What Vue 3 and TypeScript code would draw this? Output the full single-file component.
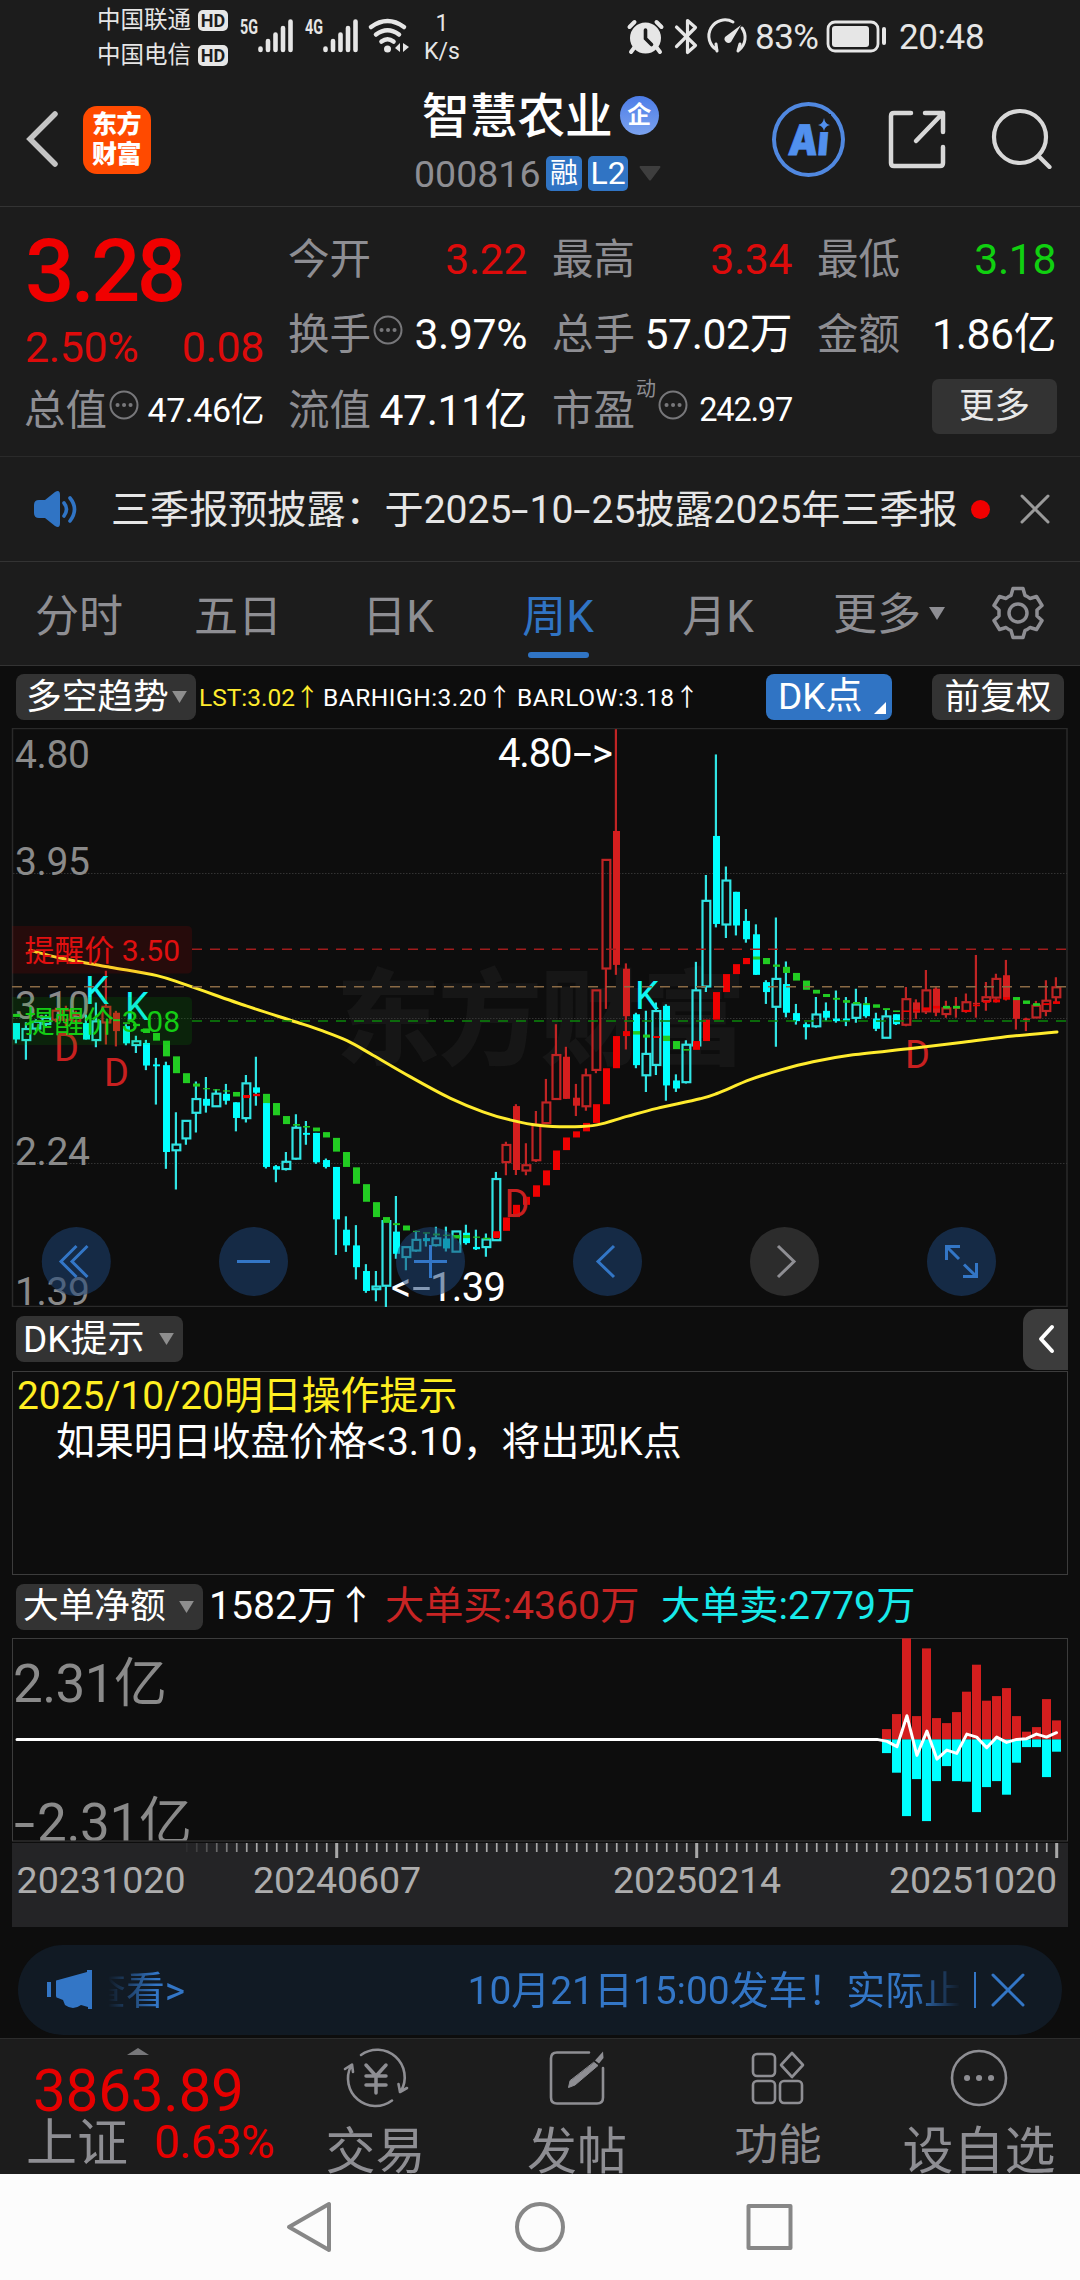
<script setup lang="ts">
type Kind = 'c' | 'o' | 'r' | 'h'
type Candle = [kind: Kind, high: number, low: number, top: number, bottom: number]
type Trend = [index: number, color: 'g' | 'r', top: number, bottom: number]

// Candle geometry is stored in chart units; 784 units span 300 pixels.
const STEP = 10
const X0 = 16.3
const cx = (i: number) => X0 + STEP * i
const cy = (v: number) => 720 + v / 2.6133

const candles: Candle[] = [
  ['c', 792, 845, 792, 835], ['o', 790, 888, 806, 838], ['o', 782, 815, 787, 808], ['o', 770, 802, 777, 796],
  ['h', 752, 790, 758, 785], ['h', 747, 800, 757, 785], ['h', 760, 795, 768, 788], ['c', 770, 835, 792, 835],
  ['o', 738, 855, 786, 838], ['h', 655, 848, 748, 792], ['r', 760, 853, 765, 813], ['c', 795, 850, 800, 845],
  ['o', 825, 870, 838, 851], ['c', 836, 915, 844, 903], ['c', 883, 1005, 900, 905], ['c', 893, 1173, 902, 1129],
  ['o', 1025, 1227, 1108, 1126], ['o', 1046, 1110, 1046, 1095], ['o', 945, 1078, 989, 1028], ['c', 933, 1026, 990, 1008],
  ['o', 965, 1011, 975, 1011], ['c', 951, 1005, 977, 995], ['c', 999, 1075, 999, 1040], ['o', 928, 1052, 948, 1042],
  ['c', 880, 1008, 960, 974], ['c', 1001, 1172, 1001, 1168], ['c', 1163, 1208, 1166, 1175], ['o', 1129, 1177, 1153, 1175],
  ['o', 1030, 1150, 1064, 1148], ['c', 1048, 1110, 1079, 1084], ['c', 1079, 1160, 1079, 1156], ['c', 1146, 1172, 1150, 1168],
  ['c', 1168, 1398, 1168, 1305], ['c', 1297, 1390, 1332, 1373], ['c', 1320, 1462, 1373, 1430], ['c', 1422, 1497, 1440, 1492],
  ['o', 1440, 1519, 1479, 1489], ['o', 1308, 1536, 1308, 1480], ['c', 1244, 1408, 1337, 1395], ['o', 1376, 1438, 1376, 1405],
  ['o', 1335, 1390, 1357, 1388], ['c', 1342, 1376, 1354, 1362], ['o', 1324, 1376, 1353, 1374], ['c', 1324, 1389, 1355, 1381],
  ['o', 1335, 1391, 1335, 1391], ['c', 1319, 1371, 1340, 1367], ['c', 1332, 1385, 1377, 1383], ['o', 1342, 1403, 1356, 1379],
  ['o', 1181, 1361, 1198, 1361], ['h', 1102, 1190, 1109, 1157], ['r', 1004, 1189, 1009, 1176], ['h', 1106, 1190, 1162, 1179],
  ['h', 1022, 1155, 1056, 1152], ['h', 938, 1055, 998, 1055], ['h', 795, 992, 874, 992], ['r', 854, 990, 880, 990],
  ['r', 951, 1035, 987, 1008], ['h', 911, 1021, 927, 1011], ['h', 705, 923, 705, 916], ['h', 364, 755, 364, 651],
  ['r', 24, 666, 290, 640], ['r', 636, 861, 650, 774], ['c', 765, 910, 769, 902], ['o', 760, 972, 871, 930],
  ['o', 738, 928, 759, 903], ['c', 743, 995, 747, 955], ['c', 926, 972, 942, 963], ['o', 837, 950, 847, 948],
  ['o', 632, 852, 705, 852], ['o', 405, 711, 471, 698], ['c', 90, 542, 303, 533], ['o', 383, 570, 418, 536],
  ['c', 449, 563, 449, 537], ['c', 494, 582, 525, 573], ['c', 534, 666, 560, 666], ['c', 680, 742, 685, 711],
  ['o', 516, 854, 675, 751], ['c', 631, 777, 690, 765], ['c', 742, 796, 766, 787], ['c', 790, 835, 795, 803],
  ['o', 724, 804, 768, 802], ['c', 738, 787, 760, 778], ['c', 707, 791, 780, 787], ['c', 724, 800, 780, 787],
  ['o', 702, 791, 742, 780], ['c', 724, 778, 742, 774], ['c', 765, 813, 780, 807], ['o', 758, 832, 773, 832],
  ['c', 769, 797, 769, 795], ['h', 698, 800, 728, 798], ['r', 730, 781, 738, 765], ['h', 653, 768, 705, 763],
  ['r', 698, 774, 702, 765], ['h', 734, 778, 752, 770], ['r', 724, 778, 750, 755], ['h', 715, 765, 736, 762],
  ['r', 614, 778, 739, 743], ['h', 685, 760, 723, 736], ['h', 663, 738, 675, 727], ['r', 627, 733, 667, 728],
  ['r', 730, 809, 730, 781], ['r', 778, 813, 780, 784], ['h', 734, 779, 745, 779], ['h', 680, 774, 732, 762],
  ['h', 672, 741, 697, 726],
]

const trend: Trend[] = [
  [0, 'g', 768, 776], [10, 'g', 782, 787], [11, 'g', 790, 794], [12, 'g', 794, 800], [13, 'g', 806, 818],
  [14, 'g', 818, 838], [15, 'g', 838, 879], [16, 'g', 879, 923], [17, 'g', 923, 949], [18, 'g', 950, 958],
  [19, 'g', 962, 965], [20, 'g', 965, 968], [21, 'g', 968, 971], [22, 'g', 972, 984], [23, 'r', 980, 988],
  [24, 'r', 977, 983], [25, 'g', 977, 1001], [26, 'g', 1001, 1033], [27, 'g', 1035, 1056], [28, 'g', 1056, 1060],
  [29, 'g', 1061, 1065], [30, 'g', 1065, 1075], [31, 'g', 1077, 1091], [32, 'g', 1092, 1128], [33, 'g', 1129, 1168],
  [34, 'g', 1169, 1212], [35, 'g', 1213, 1259], [36, 'g', 1260, 1299], [37, 'g', 1299, 1314], [38, 'g', 1315, 1320],
  [39, 'g', 1321, 1334], [40, 'g', 1335, 1338], [41, 'g', 1339, 1342], [42, 'g', 1342, 1347], [43, 'g', 1345, 1348],
  [44, 'g', 1346, 1355], [45, 'g', 1346, 1354], [46, 'g', 1350, 1353], [47, 'g', 1353, 1357], [48, 'r', 1336, 1354],
  [49, 'r', 1300, 1335], [50, 'r', 1267, 1299], [51, 'r', 1246, 1267], [52, 'r', 1216, 1246], [53, 'r', 1177, 1216],
  [54, 'r', 1125, 1176], [55, 'r', 1091, 1124], [56, 'r', 1075, 1091], [57, 'r', 1053, 1075], [58, 'r', 1004, 1053],
  [59, 'r', 910, 1004], [60, 'r', 826, 910], [61, 'r', 813, 826], [62, 'g', 813, 822], [63, 'g', 822, 830],
  [64, 'r', 826, 831], [65, 'g', 825, 839], [66, 'g', 839, 860], [67, 'g', 860, 864], [68, 'r', 839, 862],
  [69, 'r', 783, 839], [70, 'r', 711, 783], [71, 'r', 664, 711], [72, 'r', 638, 664], [73, 'r', 622, 638],
  [74, 'g', 618, 626], [75, 'g', 622, 638], [76, 'g', 639, 645], [77, 'g', 645, 661], [78, 'g', 661, 681],
  [79, 'g', 681, 705], [80, 'g', 705, 715], [81, 'g', 716, 724], [82, 'g', 726, 731], [83, 'g', 732, 739],
  [84, 'g', 737, 743], [85, 'g', 740, 745], [86, 'g', 743, 752], [87, 'g', 753, 758], [88, 'g', 759, 763],
  [89, 'r', 759, 763], [90, 'r', 757, 761], [91, 'r', 751, 760], [92, 'r', 747, 754], [93, 'g', 747, 754],
  [94, 'g', 747, 754], [95, 'r', 758, 763], [96, 'r', 744, 748], [97, 'r', 734, 739], [98, 'r', 730, 738],
  [99, 'r', 724, 731], [100, 'g', 724, 732], [101, 'g', 733, 742], [102, 'g', 740, 747], [103, 'r', 740, 745],
  [104, 'r', 735, 742],
]

const average: [number, number][] = [
  [30, 602], [60, 622], [110, 646], [157, 668], [187, 693], [247, 748], [297, 790], [322, 812], [347, 838], [373, 876],
  [410, 932], [450, 988], [483, 1024], [510, 1045], [540, 1060], [573, 1063], [597, 1058], [627, 1036],
  [657, 1015], [700, 990], [717, 976], [750, 940], [780, 915], [813, 893], [853, 875], [913, 858],
  [963, 842], [1013, 826], [1057, 815],
]

function smooth(points: [number, number][]): string {
  const p = points.map(([x, v]) => [x, cy(v)])
  let d = `M${p[0][0]} ${p[0][1].toFixed(1)}`
  for (let i = 0; i < p.length - 1; i++) {
    const a = p[Math.max(i - 1, 0)]
    const b = p[i]
    const c = p[i + 1]
    const e = p[Math.min(i + 2, p.length - 1)]
    const c1 = [b[0] + (c[0] - a[0]) / 6, b[1] + (c[1] - a[1]) / 6]
    const c2 = [c[0] - (e[0] - b[0]) / 6, c[1] - (e[1] - b[1]) / 6]
    d += ` C${c1.map(n => n.toFixed(1)).join(' ')} ${c2.map(n => n.toFixed(1)).join(' ')} ${c.map(n => n.toFixed(1)).join(' ')}`
  }
  return d
}
const averagePath = smooth(average)

const priceLabels = [
  { t: '4.80', y: 767.5 }, { t: '3.95', y: 875 }, { t: '3.10', y: 1019 }, { t: '2.24', y: 1164.5 }, { t: '1.39', y: 1304.5 },
]
const marks = [
  { t: 'K', x: 85, y: 1004 }, { t: 'K', x: 125, y: 1019.5 }, { t: 'K', x: 635, y: 1008.5 },
  { t: 'D', x: 54, y: 1061 }, { t: 'D', x: 104, y: 1086 }, { t: 'D', x: 504.5, y: 1217 }, { t: 'D', x: 905, y: 1067.5 },
]

// Large-order flow bars: offsets above and below the zero line, in pixels.
const flow: [number, number][] = [
  [10.3, 13.7], [25.3, 33.3], [101, 76.7], [23.3, 39.7], [91, 81.7], [21.3, 41.7], [16.3, 26.7], [27.3, 41.7],
  [47.7, 42.3], [74.7, 72.7], [38.7, 47.7], [43.3, 41.7], [51.3, 55.3], [23.3, 23.3], [7.7, 7.7], [12.3, 7.7],
  [40.3, 37.7], [19, 12.3],
]
const net = [2, 7.3, -23.7, 16, -8.3, 19.7, 10.7, 14, -5.3, -2.3, 8.3, -2.3, 3, 0, -0.7, -5.3, -2.3, -6.7]
const ZERO = 1739.4
const netPath = `M17 ${ZERO} H877 ` + net.map((v, i) => `L${(887 + i * 9.97).toFixed(1)} ${(ZERO + v).toFixed(1)}`).join(' ')

const ticks = Array.from({ length: 88 }, (_, i) => ({
  x: 186.7 + i * 10,
  major: i === 15 || i === 51 || i === 87,
  opacity: Math.min(1, (i + 0.5) / 7),
}))

const tabs = ['分时', '五日', '日K', '周K', '月K']
</script>

<template>
  <div class="app">
    <div class="status">
      <div class="carriers">
        <div><span>中国联通</span><b>HD</b></div>
        <div><span>中国电信</span><b>HD</b></div>
      </div>
      <svg class="signals" width="176" height="75" viewBox="236 0 176 75">
        <g fill="#e6e6e6">
          <text x="240" y="34" font-size="21" font-weight="700" textLength="18" lengthAdjust="spacingAndGlyphs">5G</text>
          <text x="305" y="34" font-size="21" font-weight="700" textLength="18" lengthAdjust="spacingAndGlyphs">4G</text>
        </g>
        <g stroke="#e6e6e6" stroke-width="4.600" stroke-linecap="round">
          <path d="M260.500 48.500V50M268 41V50M275.500 34.500V50M283 28V50M290.500 21.500V50" />
          <path d="M325.500 48.500V50M333 41V50M340.500 34.500V50M348 28V50M355.500 21.500V50" />
        </g>
        <g fill="none" stroke="#e6e6e6" stroke-width="4.600" stroke-linecap="round">
          <path d="M371 27Q387.500 15 404 27" /><path d="M376 34.500Q387.500 26 399 34.500" /><path d="M381.500 41.500Q387.500 37 393.500 41.500" />
        </g>
        <circle cx="387.500" cy="49" r="3.500" fill="#e6e6e6" />
        <path d="M400 43v9l-5-4zM403 43v9l6-5z" fill="#e6e6e6" />
      </svg>
      <div class="speed"><span>1</span><span>K/s</span></div>
      <svg class="sys" width="124" height="75" viewBox="626 0 124 75">
        <circle cx="645.500" cy="38" r="15.500" fill="#e6e6e6" />
        <path d="M629.500 27l5-5M661.500 27l-5-5M634 48l-3 4M657 48l3 4" stroke="#e6e6e6" stroke-width="4" stroke-linecap="round" />
        <path d="M645.500 30v8.500l6 6" stroke="#1c1c1c" stroke-width="3.600" fill="none" stroke-linecap="round" />
        <path d="M676.500 27l19 18.500-8 7V20.500l8 7L676.500 46.500" fill="none" stroke="#e6e6e6" stroke-width="3.200" stroke-linejoin="round" stroke-linecap="round" />
        <path d="M717 50a16 16 0 0 1 16-28M742 28a16 16 0 0 1-3 22M716 44l1 7M740 44l-2 7" fill="none" stroke="#e6e6e6" stroke-width="3" stroke-linecap="round" />
        <path d="M741 25L731 42a4 4 0 0 1-6-5z" fill="#e6e6e6" />
      </svg>
      <span class="pct">83%</span>
      <svg class="batt" width="62" height="34" viewBox="0 0 62 34">
        <rect x="2" y="2" width="50" height="29" rx="7" fill="none" stroke="#e6e6e6" stroke-width="2.800" />
        <rect x="6" y="6" width="37" height="21" rx="3" fill="#e6e6e6" />
        <path d="M58 9v14" stroke="#e6e6e6" stroke-width="4" stroke-linecap="round" />
      </svg>
      <span class="clock">20:48</span>
    </div>

    <div class="header">
      <svg class="back" width="36" height="60" viewBox="0 0 36 60"><path d="M30 5L5 30L30 55" fill="none" stroke="#c4c4c4" stroke-width="5.500" stroke-linecap="round" /></svg>
      <div class="logo"><span>东方</span><span>财富</span></div>
      <div class="title">
        <div class="name"><span>智慧农业</span><i>企</i></div>
        <div class="code">
          <span>000816</span><b class="rz">融</b><b class="l2">L2</b>
          <svg width="22" height="15" viewBox="0 0 22 15"><path d="M1 0H21Q22 1 21 2L12 14Q11 15 10 14L1 2Q0 1 1 0Z" fill="#3e3e3e" /></svg>
        </div>
      </div>
      <div class="ai"><span>Ai</span><svg width="15" height="18" viewBox="0 0 15 18"><path d="M8 4Q9 10 14 11Q9 12 8 17Q7 12 2 11Q7 10 8 4Z" fill="#5190ee" /></svg></div>
      <svg class="share" width="62" height="62" viewBox="0 0 62 62" fill="none" stroke="#d8d8d8" stroke-width="4.500" stroke-linecap="round" stroke-linejoin="round">
        <path d="M24 4H7Q4 4 4 7V54Q4 57 7 57H53Q56 57 56 54V38" /><path d="M38 4H56V23M56 4L29 32" />
      </svg>
      <svg class="search" width="62" height="62" viewBox="0 0 62 62" fill="none" stroke="#d8d8d8" stroke-width="4.200" stroke-linecap="round"><circle cx="29" cy="30" r="26" /><path d="M47.500 49L58.500 60" /></svg>
    </div>

    <div class="quote">
      <div class="main">
        <div class="price">3.28</div>
        <div class="chg"><span>2.50%</span><span>0.08</span></div>
        <div class="cell"><span>总值</span><svg class="more" width="30" height="30" viewBox="0 0 30 30"><circle cx="15" cy="15" r="13.500" /><path d="M8.500 15h.1M15 15h.1M21.500 15h.1" /></svg><em class="sm">47.46亿</em></div>
      </div>
      <div class="col c2">
        <div class="cell"><span>今开</span><em class="up">3.22</em></div>
        <div class="cell"><span>换手</span><svg class="more" width="30" height="30" viewBox="0 0 30 30"><circle cx="15" cy="15" r="13.500" /><path d="M8.500 15h.1M15 15h.1M21.500 15h.1" /></svg><em>3.97%</em></div>
        <div class="cell"><span>流值</span><em>47.11亿</em></div>
      </div>
      <div class="col c3">
        <div class="cell"><span>最高</span><em class="up">3.34</em></div>
        <div class="cell"><span>总手</span><em>57.02万</em></div>
        <div class="cell"><span>市盈</span><sup>动</sup><svg class="more" width="30" height="30" viewBox="0 0 30 30"><circle cx="15" cy="15" r="13.500" /><path d="M8.500 15h.1M15 15h.1M21.500 15h.1" /></svg><em class="sm pe">242.97</em></div>
      </div>
      <div class="col c4">
        <div class="cell"><span>最低</span><em class="down">3.18</em></div>
        <div class="cell"><span>金额</span><em>1.86亿</em></div>
        <div class="cell end"><button>更多</button></div>
      </div>
    </div>

    <div class="notice">
      <svg class="spk" width="46" height="38" viewBox="0 0 46 38"><path d="M6 10H12L22 2Q27-1 27 5V33Q27 39 22 36L12 28H6Q1 28 1 23V15Q1 10 6 10Z" fill="#3074c4" /><path d="M31 13q5 6 0 13M37 8q9 11 0 23" fill="none" stroke="#3074c4" stroke-width="3.600" stroke-linecap="round" /></svg>
      <span class="txt">三季报预披露：于2025<i>-</i>10<i>-</i>25披露2025年三季报</span>
      <u class="dot" />
      <svg class="x" width="30" height="30" viewBox="0 0 30 30"><path d="M2 2L28 28M28 2L2 28" stroke="#9a9a9a" stroke-width="3" stroke-linecap="round" /></svg>
    </div>

    <div class="tabs">
      <div v-for="(t, i) in tabs" :key="t" class="tab" :class="{ on: i === 3 }">{{ t }}</div>
      <div class="tab wide">更多<svg width="16" height="13" viewBox="0 0 16 13"><path d="M0 0H16L8 13Z" fill="#8e8e93" /></svg></div>
      <svg class="gear" width="54" height="54" viewBox="-27 -27 54 54" fill="none" stroke="#8e8e93" stroke-width="3.500" stroke-linejoin="round">
        <path d="M-5-24.500H5L7-17.500Q9-17 12-14.500L18.500-16.500L24-7.500L19-3V3L24 7.500L18.500 16.500L12 14.500Q9 17 7 17.500L5 24.500H-5L-7 17.500Q-9 17-12 14.500L-18.500 16.500L-24 7.500L-19 3V-3L-24-7.500L-18.500-16.500L-12-14.500Q-9-17-7-17.500Z" />
        <circle r="9" />
      </svg>
    </div>

    <div class="indic">
      <div class="chip i1">多空趋势<svg width="15" height="12" viewBox="0 0 16 13"><path d="M0 0H16L8 13Z" fill="#8e8e8e" /></svg></div>
      <span class="v y">LST:3.02↑</span><span class="v bh">BARHIGH:3.20↑</span><span class="v bl">BARLOW:3.18↑</span>
      <div class="chip dk">DK点<svg width="12" height="12" viewBox="0 0 12 12"><path d="M12 0V12H0Z" fill="#fff" /></svg></div>
      <div class="chip fq">前复权</div>
    </div>

    <svg class="chart" width="1080" height="579" viewBox="0 728 1080 579">
      <text class="wm" x="336" y="1057" textLength="410">东方财富</text>
      <rect x="12.500" y="728.500" width="1054.500" height="578" fill="none" stroke="#2a2a2a" stroke-width="1.500" />
      <path d="M13 873.500H1067M13 1018.500H1067M13 1163.500H1067" stroke="#333" stroke-dasharray="1.500 1.500" />
      <text v-for="l in priceLabels" :key="l.t" class="pl" x="15" :y="l.y" textLength="75">{{ l.t }}</text>

      <g v-for="(k, i) in candles" :key="i" :class="k[0]">
        <template v-if="k[0] === 'c' || k[0] === 'r'">
          <path class="wick" :d="`M${cx(i) - 0.4} ${cy(k[1])}V${cy(k[2])}`" />
          <rect class="body" :x="cx(i) - 3.300" :y="cy(k[3])" width="7" :height="cy(k[4]) - cy(k[3])" />
        </template>
        <template v-else>
          <path class="wick" :d="`M${cx(i) - 0.4} ${cy(k[1])}V${cy(k[3])}M${cx(i) - 0.4} ${cy(k[4])}V${cy(k[2])}`" />
          <rect class="hollow" :x="cx(i) - 3.800" :y="cy(k[3]) + 0.6" width="7.800" :height="cy(k[4]) - cy(k[3]) - 1.2" />
        </template>
      </g>
      <rect v-for="b in trend" :key="'t' + b[0]" :x="cx(b[0]) - 3.300" :y="cy(b[2])" width="7" :height="(b[3] - b[2]) / 2.6133" :fill="b[1] === 'g' ? '#22cc22' : '#ee0000'" />
      <text v-for="(m, i) in marks" :key="'m' + i" :class="['mk', m.t]" :x="m.x" :y="m.y">{{ m.t }}</text>

      <path :d="averagePath" fill="none" stroke="#ffeb2d" stroke-width="3" stroke-linecap="round" />

      <path d="M192 949.200H1067" stroke="#a01c1c" stroke-width="1.500" stroke-dasharray="10 8" />
      <path d="M12 986.800H1067" stroke="#8a6a45" stroke-width="1.500" stroke-dasharray="10 8" />
      <path d="M192 1021H1067" stroke="#0a860a" stroke-width="1.500" stroke-dasharray="10 8" />
      <path d="M12 926H187Q192 926 192 931V968.500Q192 973.500 187 973.500H12Z" fill="#e00000" fill-opacity=".12" />
      <path d="M12 997H187Q192 997 192 1002V1040Q192 1045 187 1045H12Z" fill="#00c800" fill-opacity=".12" />
      <text class="alert" x="24.500" y="960.500" fill="#e01010" textLength="155.500">提醒价 3.50</text>
      <text class="alert" x="24.500" y="1032" fill="#14cc14" textLength="155.500">提醒价 3.08</text>

      <text class="peak" x="498" y="766.500" textLength="74.500">4.80</text>
      <text class="peak" x="573" y="766.500" textLength="19" lengthAdjust="spacingAndGlyphs">-</text>
      <text class="peak" x="592" y="766.500" textLength="22">&gt;</text>
      <text class="peak" x="391" y="1300.500" textLength="21">&lt;</text>
      <text class="peak" x="412" y="1300.500" textLength="19" lengthAdjust="spacingAndGlyphs">-</text>
      <text class="peak" x="430" y="1300.500" textLength="76">1.39</text>

      <g fill="#1e4474" fill-opacity=".55">
        <circle cx="76.300" cy="1261.500" r="34.500" /><circle cx="253.500" cy="1261.500" r="34.500" /><circle cx="430.500" cy="1261.500" r="34.500" /><circle cx="607.500" cy="1261.500" r="34.500" /><circle cx="961.500" cy="1261.500" r="34.500" />
      </g>
      <circle cx="784.500" cy="1261.500" r="34.500" fill="#2c2c2c" />
      <g fill="none" stroke="#3376c6" stroke-width="3">
        <path d="M76.500 1246L61 1261.500L76.500 1277M87.500 1246L72 1261.500L87.500 1277" />
        <path d="M237 1261.500H270" /><path d="M414 1261.500H447M430.500 1245V1278" />
        <path d="M614 1246L598 1261.500L614 1277" />
        <path d="M960 1246.500H946.500V1260M946.500 1246.500L959 1259M963 1276.500H976.500V1263M976.500 1276.500L964 1264.500" />
      </g>
      <path d="M778 1246L794 1261.500L778 1277" fill="none" stroke="#8f8f94" stroke-width="3" />
    </svg>

    <div class="rowbar tip">
      <div class="chip i2"><span>DK提示</span><svg width="15" height="12" viewBox="0 0 16 13"><path d="M0 0H16L8 13Z" fill="#8e8e8e" /></svg></div>
      <div class="fold"><svg width="18" height="30" viewBox="0 0 18 30"><path d="M15 3L4 15L15 27" fill="none" stroke="#fff" stroke-width="4" stroke-linecap="round" stroke-linejoin="round" /></svg></div>
    </div>
    <div class="panel">
      <p class="date">2025/10/20明日操作提示</p>
      <p class="hint">如果明日收盘价格&lt;3.10，将出现K点</p>
    </div>
    <div class="rowbar">
      <div class="chip i3"><span>大单净额</span><svg width="15" height="12" viewBox="0 0 16 13"><path d="M0 0H16L8 13Z" fill="#8e8e8e" /></svg></div>
      <span class="o1">1582万↑</span><span class="o2">大单买:4360万</span><span class="o3">大单卖:2779万</span>
    </div>

    <svg class="flow" width="1080" height="205" viewBox="0 1638 1080 205">
      <clipPath id="box"><rect x="12" y="1638" width="1056" height="202.500" /></clipPath>
      <rect x="12.500" y="1638.500" width="1055" height="202.500" fill="none" stroke="#3c3c3c" />
      <g clip-path="url(#box)" class="fl">
        <text x="13" y="1701.500" textLength="154">2.31亿</text>
        <text x="14" y="1841" textLength="21" lengthAdjust="spacingAndGlyphs">-</text>
        <text x="37" y="1841" textLength="155">2.31亿</text>
      </g>
      <template v-for="(f, i) in flow" :key="i">
        <rect :x="882 + i * 10" :y="ZERO - f[0]" width="9" :height="f[0]" fill="#d41e1e" />
        <rect :x="882 + i * 10" :y="ZERO" width="9" :height="f[1]" fill="#00ffff" />
      </template>
      <path :d="netPath" fill="none" stroke="#fff" stroke-width="3" stroke-linejoin="round" stroke-linecap="round" />
    </svg>
    <svg class="axis" width="1080" height="84" viewBox="0 1843 1080 84">
      <rect x="12" y="1843" width="1056" height="84" fill="#242426" />
      <rect v-for="(t, i) in ticks" :key="i" :x="t.x - (t.major ? 1.500 : 0.800)" y="1843" :width="t.major ? 3 : 1.700" :height="t.major ? 15 : 9" fill="#a8a8a8" :opacity="t.opacity" />
      <text x="16.500" y="1892.500" textLength="169">20231020</text>
      <text x="253" y="1892.500" textLength="168">20240607</text>
      <text x="613" y="1892.500" textLength="168">20250214</text>
      <text x="889" y="1892.500" textLength="168">20251020</text>
    </svg>

    <div class="banner">
      <svg width="46" height="40" viewBox="0 0 46 40"><path d="M2 12V27" stroke="#3376c6" stroke-width="4" /><path d="M9 11Q9 10 11 10L40 2V0H45V39H41V37L34 35Q26 41 18 35L16 30L11 28Q9 28 9 26Z" fill="#3376c6" /></svg>
      <div class="scroll"><span>查看&gt;</span><span>10月21日15:00发车！实际止</span></div>
      <u />
      <svg class="bx" width="34" height="34" viewBox="0 0 34 34"><path d="M2 2L32 32M32 2L2 32" stroke="#3376c6" stroke-width="3" stroke-linecap="round" /></svg>
    </div>

    <div class="bottom">
      <div class="index">
        <svg width="22" height="7" viewBox="0 0 22 7"><path d="M0 7L11 0L22 7Z" fill="#77777a" /></svg>
        <div class="pts">3863.89</div>
        <div class="idx"><span>上证</span><em>0.63%</em></div>
      </div>
      <div class="nav n1">
        <svg width="66" height="62" viewBox="-33 -31 66 62"><path d="M-15-23A27.500 27.500 0 0 1 25 13M16 22.500A27.500 27.500 0 0 1-25-12M-31-9L-24-13.500L-23-6M31 10L24 14L22.500 6" /><path d="M-10-13L0-2L10-13M0-2V15M-10-2H10M-10 7H10" stroke-width="3.500" /></svg>
        <span>交易</span>
      </div>
      <div class="nav n2">
        <svg width="66" height="62" viewBox="-33 -31 66 62"><path d="M12-25.500H-20Q-26-25.500-26-19.500V19.500Q-26 25.500-20 25.500H20Q26 25.500 26 19.500V-10" /><path d="M26-26.500L18-17.500L22-14.500L26.500-20Z" fill="#8e8e93" stroke="none" /><path d="M17-15.500L21-12.500L-2 7L-8.500 9.500L-7 3Z" fill="#8e8e93" stroke-width="1" /></svg>
        <span>发帖</span>
      </div>
      <div class="nav n3">
        <svg width="66" height="62" viewBox="-33 -31 66 62"><rect x="-25" y="-24" width="22" height="22" rx="4" /><rect x="-25" y="3" width="22" height="22" rx="4" /><rect x="2" y="3" width="22" height="22" rx="4" /><path d="M14-25L25-13L14-1L3-13Z" /></svg>
        <span>功能</span>
      </div>
      <div class="nav n4">
        <svg width="66" height="62" viewBox="-33 -31 66 62"><circle r="27" /><path d="M-12 0h.1M0 0h.1M12 0h.1" stroke-width="6" /></svg>
        <span>设自选</span>
      </div>
    </div>

    <div class="sysnav">
      <svg width="1080" height="106" viewBox="0 2174 1080 106" fill="none" stroke="#878787" stroke-width="4" stroke-linejoin="round"><path d="M329 2204V2250L289 2227Z" /><circle cx="540" cy="2227" r="23" /><rect x="748.500" y="2206" width="42" height="42" /></svg>
    </div>
  </div>
</template>

<style>
body { background: #0d0d0d; }
</style>

<style scoped>
* { box-sizing: border-box; }
.app { width: 1080px; height: 2280px; overflow: hidden; background: #0d0d0d; color: #fff; font-family: Roboto, "Noto Sans CJK SC", sans-serif; display: flex; flex-direction: column; white-space: nowrap; }
.app > * { flex: none; }
svg { display: block; flex: none; }
em, i { font-style: normal; }
.status { height: 75px; background: #1c1c1c; display: flex; color: #e6e6e6; }
.carriers { width: 138px; margin-left: 97px; padding-top: 3px; }
.carriers div { height: 35px; display: flex; align-items: center; justify-content: space-between; padding-right: 7px; }
.carriers span { font-size: 23.500px; line-height: 35px; }
.carriers b { width: 30px; height: 21px; border-radius: 5px; background: #e6e6e6; color: #1c1c1c; font-size: 18px; line-height: 21px; text-align: center; }
.signals { margin-left: 1px; }
.speed { width: 60px; margin-left: 0; padding-top: 10px; display: flex; flex-direction: column; align-items: center; font-size: 23px; line-height: 27.500px; }
.sys { margin-left: 154px; }
.pct, .clock { font-size: 35px; line-height: 75px; }
.pct { width: 76px; padding-left: 5px; letter-spacing: -.5px; }
.batt { margin-top: 20px; }
.clock { margin-left: 11px; letter-spacing: -.4px; }
.header { height: 132px; background: #1c1c1c; border-bottom: 1.500px solid #333; display: flex; }
.back { margin: 34px 0 0 25px; }
.logo { width: 68px; height: 68px; margin: 31px 0 0 22px; border-radius: 14px; background: #ff4a00; display: flex; flex-direction: column; align-items: center; padding: 4px 1px 0 0; }
.logo span { font-size: 25px; font-weight: 900; line-height: 29.500px; letter-spacing: -.5px; }
.title { width: 260px; margin-left: 263px; }
.name { height: 79px; display: flex; align-items: center; padding-left: 8px; line-height: 79px; }
.name span { font-size: 47.700px; font-weight: 500; padding-top: 5px; line-height: 79px; }
.name i { width: 39px; height: 39px; border-radius: 50%; background: linear-gradient(#4d7de8, #7ba2ee); font-size: 24px; font-weight: 700; line-height: 38px; text-align: center; margin: 2px 0 0 7px; }
.code { display: flex; align-items: center; color: #8e8e93; height: 38px; line-height: 39px; }
.code span { font-size: 37.500px; width: 132px; padding-top: 2px; }
.code b { height: 35px; border-radius: 5px; background: #3074c4; color: #fff; font-weight: 400; text-align: center; line-height: 35px; }
.rz { width: 36px; font-size: 28px; }
.l2 { width: 40px; margin: 0 11px 0 6px; font-size: 32px; }
.ai { position: relative; width: 73px; height: 75px; margin: 27px 0 0 98px; border: 4px solid #5088e0; border-radius: 50%; color: #5190ee; display: flex; justify-content: center; }
.ai span { font-family: Inter, sans-serif; font-weight: 900; font-size: 42px; line-height: 67px; transform: skewX(-5deg) scaleX(.88); -webkit-text-stroke: .8px #5190ee; }
.ai svg { position: absolute; left: 40px; top: 8px; background: #1c1c1c; }
.search { margin: 32px 0 0 42px; }
.header .share { margin: 34px 0 0 42px; }
.quote { height: 250px; background: #1c1c1c; border-bottom: 1.500px solid #2a2a2a; display: flex; padding-left: 25px; }
.main { width: 239px; }
.price { height: 98px; padding-top: 13px; font-size: 87px; font-weight: 500; line-height: 102px; color: #f00000; letter-spacing: -3.800px; }
.chg { height: 67px; display: flex; justify-content: space-between; font-size: 43px; line-height: 84px; color: #dd0b0b; letter-spacing: -.4px; }
.col { width: 239px; margin-left: 24px; padding-top: 14px; }
.c3 { width: 240px; margin-left: 25px; }
.c4 { width: 239px; margin-left: 25px; }
.cell { height: 75.500px; display: flex; align-items: center; color: #8e8e93; font-size: 41.500px; line-height: 70px; }
.cell > span { padding-top: 2px; }
.main .cell { margin-left: -1px; width: 240px; }
.cell em { margin-left: auto; color: #fff; font-size: 42.700px; line-height: 76px; letter-spacing: -.4px; }
.cell em.sm { font-size: 34px; letter-spacing: -.5px; }
.cell em.pe { font-size: 32.500px; letter-spacing: -1.200px; }
.cell em.up { color: #dd0b0b; }
.cell em.down { color: #10d010; }
.more { margin: -9px 0 0 2px; fill: none; stroke: #77777a; stroke-width: 2; }
.more path { stroke-width: 4; stroke-linecap: round; }
sup { font-size: 20px; line-height: 20px; margin: -42px 0 0 1px; }
sup + .more { margin-left: 2px; }
.end { justify-content: flex-end; }
button { width: 125px; height: 55px; border: 0; border-radius: 7px; background: #333; color: #e8e8e8; font: 35.500px Roboto, "Noto Sans CJK SC", sans-serif; line-height: 55px; padding: 0; margin-right: -1px; margin-top: -6px; }
.notice { height: 105px; background: #1c1c1c; border-bottom: 1.500px solid #333; display: flex; align-items: center; color: #e6e6e6; line-height: 104px; }
.spk { margin-left: 33px; }
.txt { width: 851px; margin-left: 32px; font-size: 39.100px; padding-top: 1px; }
.txt i { display: inline-block; width: 18px; text-align: center; transform: scaleX(1.600); }
.dot { width: 19px; height: 19px; border-radius: 50%; background: #f00000; margin-left: 9px; }
.x { margin-left: 30px; }
.tabs { height: 104px; background: #1c1c1c; border-bottom: 1.500px solid #333; display: flex; align-items: center; color: #8e8e93; font-size: 44px; }
.tab { height: 100%; width: 160px; line-height: 110px; text-align: center; position: relative; }
.tab:first-child { width: 158px; }
.tab.on { color: #3074c4; }
.tab.on::after { content: ""; position: absolute; left: 50px; bottom: 7px; width: 61px; height: 6px; border-radius: 3px; background: #3074c4; }
.tab.wide { width: 144px; margin-left: 35px; padding-top: 3px; display: flex; align-items: center; }
.tab.wide svg { margin: -3px 0 0 8px; }
.gear { margin-left: 14px; margin-top: -1px; }
.indic { height: 62px; display: flex; align-items: center; padding: 0 16px 0 16px; }
.chip { height: 46px; border-radius: 8px; background: #333; font-size: 35.700px; display: flex; align-items: center; line-height: 48px; }
.i1 { width: 180px; padding-left: 10px; }
.i1 svg { margin-left: 3px; }
.v { font-size: 24.500px; line-height: 62px; padding-top: 2px; }
.y { width: 124px; margin-left: 3px; color: #ffeb2d; letter-spacing: 0; }
.bh { width: 194px; letter-spacing: .5px; }
.bl { width: 191px; letter-spacing: .6px; }
.dk { width: 126px; margin-left: 58px; background: #3074c4; padding-left: 12px; position: relative; font-size: 37px; }
.dk svg { position: absolute; right: 6px; bottom: 6px; }
.fq { width: 132px; margin-left: 40px; justify-content: center; }
.chart text { font-size: 39px; }
.chart .wm { font-size: 104px; font-weight: 900; fill: #161616; }
.chart .pl { fill: #8a8a8a; }
.chart .alert { font-size: 30px; }
.chart .peak { font-size: 40px; fill: #fff; }
.chart .mk { font-size: 38px; }
.K { fill: #10f4f4; }
.D { fill: #c82020; }
.wick { fill: none; stroke-width: 2.200; }
.hollow { fill: none; stroke-width: 2.200; }
.c .wick, .o .wick, .o .hollow { stroke: #30e4e4; }
.r .wick, .h .wick, .h .hollow { stroke: #c02424; }
.c .body { fill: #00ffff; }
.r .body { fill: #d41e1e; }
.rowbar { height: 63px; display: flex; align-items: center; padding-left: 16px; font-size: 39.200px; line-height: 63px; }
.rowbar.tip { height: 64px; }
.rowbar .chip { line-height: 47px; justify-content: space-between; padding: 0 9px 0 7px; }
.i2 { width: 167px; }
.i2 span { font-size: 37px; }
.i3 { width: 187px; }
.fold { width: 45px; height: 61px; margin-left: 840px; border-radius: 14px 0 0 14px; background: #3c3c3c; display: flex; align-items: center; justify-content: center; }
.panel { height: 204px; width: 1056px; margin-left: 12px; border: 1px solid #3c3c3c; padding: 1px 0 0 4px; font-size: 38.900px; }
.panel p { margin: 0; line-height: 46px; }
.date { color: #ffee22; }
.panel .hint { padding-left: 39px; }
.o1 { width: 176px; margin-left: 6px; }
.o2 { width: 276px; color: #c82424; }
.o3 { color: #18eaea; }
.fl { font-size: 53px; fill: #8a8a8a; }
.axis { font-size: 37.500px; fill: #adadad; }
.banner { width: 1044px; height: 90px; margin: 18px 0 3px 18px; border-radius: 45px; background: #111a24; display: flex; align-items: center; color: #3376c6; padding-left: 29px; }
.scroll { width: 855px; margin-left: 15px; display: flex; justify-content: space-between; font-size: 38.900px; line-height: 91px; -webkit-mask-image: linear-gradient(90deg, transparent 0, #000 48px, #000 805px, transparent 852px); mask-image: linear-gradient(90deg, transparent 0, #000 48px, #000 805px, transparent 852px); }
.scroll span:first-child { margin-left: -21px; }
.banner u { width: 1.500px; height: 36px; background: #3376c6; margin-left: 11px; }
.banner .bx { margin-left: 15px; }
.bottom { height: 136px; overflow: hidden; background: #1c1c1c; border-top: 1.500px solid #2c2c2c; display: flex; color: #8e8e93; }
.bottom > * { flex: none; }
.index { width: 298px; }
.index svg { margin: 9px 0 0 127px; }
.pts { margin: 3px 0 0 33px; font-size: 58.500px; line-height: 66px; color: #e60000; letter-spacing: -.3px; }
.idx { display: flex; align-items: center; margin: -10px 0 0 26px; height: 60px; font-size: 51px; line-height: 60px; }
.idx em { font-size: 46px; line-height: 56px; padding-bottom: 4px; color: #e60000; margin-left: 26px; letter-spacing: -.7px; }
.nav { display: flex; flex-direction: column; align-items: center; padding-top: 8px; }
.nav svg { fill: none; stroke: #8e8e93; stroke-width: 2.600; stroke-linecap: round; stroke-linejoin: round; }
.nav span { font-size: 50px; line-height: 60px; margin-top: 13px; }
.n1 { width: 155px; }
.n2 { width: 248px; }
.n3 { width: 154px; }
.n3 span { font-size: 43.500px; margin-top: 7px; }
.n4 { width: 248px; }
.n4 span { font-size: 51px; }
.sysnav { height: 106px; background: #fcfcfc; }
</style>
